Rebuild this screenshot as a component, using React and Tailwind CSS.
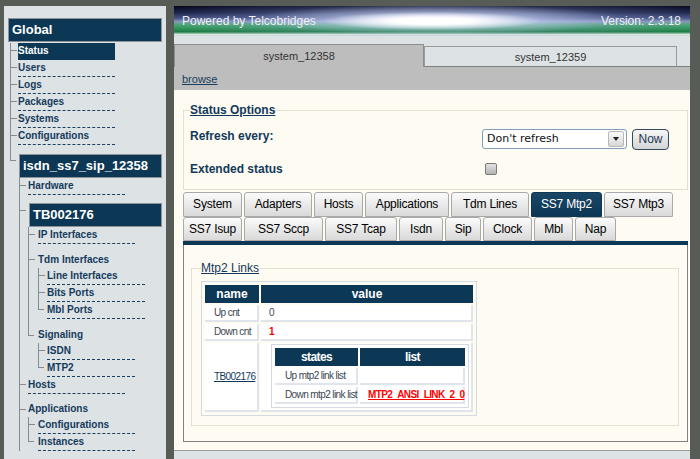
import React from 'react';

// tree connector: vertical line for siblings, tick into the item
function Branch({ last = false, tick = 'h-[8px]', col = 'w-[8px]', children }) {
  return (
    <div className="flex">
      <div className={`${col} shrink-0 ${last ? '' : 'border-l border-[#858b90]'}`}>
        <div className={`${tick} w-[6px] border-b border-[#858b90] ${last ? 'border-l' : ''}`} />
      </div>
      <div className="min-w-0 flex-1">{children}</div>
    </div>
  );
}

function Leaf({ label, w = 'w-[97px]', active = false }) {
  return (
    <div
      className={`${w} h-[17px] border-b border-dashed text-[10px] font-bold leading-[16px] ${
        active ? 'bg-[#0c3855] border-[#0c3855] text-white' : 'border-[#1d3f5e] text-[#153b5c]'
      }`}
    >
      {label}
    </div>
  );
}

function Label({ label }) {
  return <div className="h-[16px] text-[10px] font-bold leading-[16px] text-[#153b5c]">{label}</div>;
}

function NodeBox({ label, cls = '' }) {
  return (
    <div className={`h-[24px] border border-[#8e9398] bg-[#0c3855] pl-[3px] text-[13px] font-bold leading-[22px] text-white ${cls}`}>
      {label}
    </div>
  );
}

const ROW1 = [
  ['System', 'w-[59px]'],
  ['Adapters', 'w-[68px]'],
  ['Hosts', 'w-[49px]'],
  ['Applications', 'w-[84px]'],
  ['Tdm Lines', 'w-[78px]'],
  ['SS7 Mtp2', 'w-[71px]', true],
  ['SS7 Mtp3', 'w-[69px]'],
];

const ROW2 = [
  ['SS7 Isup', 'w-[59px]'],
  ['SS7 Sccp', 'w-[79px]'],
  ['SS7 Tcap', 'w-[72px]'],
  ['Isdn', 'w-[44px]'],
  ['Sip', 'w-[36px]'],
  ['Clock', 'w-[49px]'],
  ['Mbl', 'w-[39px]'],
  ['Nap', 'w-[41px]'],
];

function Tab({ label, w, active, h }) {
  return (
    <div
      className={`${w} ${h} shrink-0 whitespace-nowrap rounded-t-[3px] border text-center text-[12px] leading-[22px] tracking-[-0.2px] ${
        active
          ? 'border-[#0c3855] bg-[linear-gradient(to_bottom,#1a4565,#0c3855)] text-white'
          : 'border-[#a9a9a9] bg-[linear-gradient(to_bottom,#fbfbfb,#d9d9d9)] text-black'
      }`}
    >
      {label}
    </div>
  );
}

const TH = 'h-[18px] bg-[#0c3855] text-center text-[12px] font-bold leading-[18px] text-white';
const TD = 'h-[17px] whitespace-nowrap border-r-2 border-b-2 border-[#dfe5ea] bg-white text-[10px] tracking-[-0.6px] leading-[15px] text-[#3a4550]';

function Sidebar() {
  return (
    <div className="w-[162px] shrink-0 bg-[#dde2e5] px-[4px] pt-[12px]">
      <NodeBox label="Global" />
      <div className="pl-[2px] pt-[1px]">
        <Branch><Leaf label="Status" active /></Branch>
        <Branch><Leaf label="Users" /></Branch>
        <Branch><Leaf label="Logs" /></Branch>
        <Branch><Leaf label="Packages" /></Branch>
        <Branch><Leaf label="Systems" /></Branch>
        <Branch><Leaf label="Configurations" /></Branch>
        <Branch last tick="h-[16px]">
          <div className="pt-[9px]">
            <NodeBox label="isdn_ss7_sip_12358" cls="ml-[1px]" />
          </div>
          <div className="pl-[1px]">
            <Branch col="w-[9px]"><Leaf label="Hardware" /></Branch>
            <Branch col="w-[9px]" tick="h-[16px]">
              <div className="pt-[8px]">
                <NodeBox label="TB002176" cls="ml-[1px]" />
              </div>
              <div>
                <Branch col="w-[10px]"><Leaf label="IP Interfaces" /></Branch>
                <Branch col="w-[10px]" tick="h-[16px]">
                  <div className="pt-[8px]"><Label label="Tdm Interfaces" /></div>
                  <div>
                    <Branch col="w-[9px]"><Leaf label="Line Interfaces" w="w-[98px]" /></Branch>
                    <Branch col="w-[9px]"><Leaf label="Bits Ports" w="w-[98px]" /></Branch>
                    <Branch col="w-[9px]" last><Leaf label="Mbl Ports" w="w-[98px]" /></Branch>
                  </div>
                </Branch>
                <Branch col="w-[10px]" last tick="h-[17px]">
                  <div className="pt-[8px]"><Label label="Signaling" /></div>
                  <div>
                    <Branch col="w-[9px]"><Leaf label="ISDN" w="w-[88px]" /></Branch>
                    <Branch col="w-[9px]" last><Leaf label="MTP2" w="w-[88px]" /></Branch>
                  </div>
                </Branch>
              </div>
            </Branch>
            <Branch col="w-[9px]"><Leaf label="Hosts" /></Branch>
            <Branch col="w-[9px]" tick="h-[16px]">
              <div className="pt-[7px]"><Label label="Applications" /></div>
              <div>
                <Branch col="w-[10px]"><Leaf label="Configurations" /></Branch>
                <Branch col="w-[10px]" last><Leaf label="Instances" /></Branch>
              </div>
            </Branch>
          </div>
        </Branch>
      </div>
    </div>
  );
}

function StatusOptions() {
  return (
    <fieldset className="border border-[#e3e0d3] pl-[6px] pb-[9px]">
      <legend className="text-[12px] font-bold leading-[12px] text-[#12395a] underline">Status Options</legend>
      <div className="mt-[12px] flex h-[22px] items-center">
        <div className="w-[292px] self-start pt-[1px] text-[12px] font-bold leading-[14px] text-[#12395a]">Refresh every:</div>
        <div className="flex h-[20px] w-[145px] items-center rounded-[3px] border border-[#7f9db9] bg-white pl-[4px] font-['DejaVu_Sans',sans-serif] text-[11px] text-[#111]">
          <span className="flex-1">Don't refresh</span>
          <div className="mr-[2px] flex h-[16px] w-[16px] items-center justify-center rounded-[2px] border border-[#b8b8b8] bg-[linear-gradient(to_bottom,#fafafa,#d8d8d8)]">
            <div className="h-0 w-0 border-x-[3px] border-t-[4px] border-x-transparent border-t-[#222]" />
          </div>
        </div>
        <div className="ml-[5px] flex h-[21px] w-[37px] items-center justify-center rounded-[4px] border border-[#34495c] bg-[linear-gradient(to_bottom,#f7f7f7,#d2d4d6)] text-[12px] text-[#1d3550]">
          Now
        </div>
      </div>
      <div className="mt-[8px] flex h-[22px] items-center">
        <div className="w-[292px] text-[12px] font-bold leading-[14px] text-[#12395a]">Extended status</div>
        <div className="ml-[3px] h-[12px] w-[12px] rounded-[2px] border border-[#7a7a7a] bg-[linear-gradient(to_bottom,#e2e2e2,#b4b4b4)]" />
      </div>
    </fieldset>
  );
}

function Mtp2Links() {
  return (
    <fieldset className="border border-[#e3e0d3] pl-[9px] pb-[9px]">
      <legend className="text-[12px] leading-[14px] text-[#12395a] underline">Mtp2 Links</legend>
      <table className="mt-[6px] w-[276px] table-fixed border-separate border-spacing-[2px] border border-[#d3dae0] p-[1px]">
        <tbody>
          <tr>
            <th className={`${TH} w-[54px]`}>name</th>
            <th className={`${TH} w-[212px]`}>value</th>
          </tr>
          <tr>
            <td className={`${TD} pl-[9px]`}>Up cnt</td>
            <td className={`${TD} pl-[8px]`}>0</td>
          </tr>
          <tr>
            <td className={`${TD} pl-[9px]`}>Down cnt</td>
            <td className={`${TD} pl-[8px] font-bold text-[#ff0000]`}>1</td>
          </tr>
          <tr>
            <td className={`${TD} h-[68px] pl-[9px] align-middle`}>
              <span className="text-[#12395a] underline">TB002176</span>
            </td>
            <td className={`${TD} h-[68px] pt-[1px] pl-[10px] pb-[2px] align-top`}>
              <table className="w-[198px] table-fixed border-separate border-spacing-[2px] border border-[#d3dae0] p-[1px]">
                <tbody>
                  <tr>
                    <th className={`${TH} h-[16px] w-[83px] leading-[16px]`}>states</th>
                    <th className={`${TH} h-[16px] w-[105px] leading-[16px]`}>list</th>
                  </tr>
                  <tr>
                    <td className={`${TD} pl-[10px]`}>Up mtp2 link list</td>
                    <td className={TD} />
                  </tr>
                  <tr>
                    <td className={`${TD} pl-[10px]`}>Down mtp2 link list</td>
                    <td className={`${TD} pl-[8px] text-[9px] font-bold tracking-[-0.2px] text-[#ff0000] underline`}>MTP2_ANSI_LINK_2_0</td>
                  </tr>
                </tbody>
              </table>
            </td>
          </tr>
        </tbody>
      </table>
    </fieldset>
  );
}

export default function App() {
  return (
    <div className="flex h-[459px] w-[700px] gap-[8px] overflow-hidden bg-[#585c57] pl-[4px] pt-[6px] font-['Liberation_Sans',Arial,sans-serif]">
      <Sidebar />
      <div className="flex w-[516px] shrink-0 flex-col">
        <div className="flex h-[30px] items-center justify-between bg-[radial-gradient(ellipse_110px_9px_at_50%_50%,#ffffff_0%,#ffffff_35%,rgba(255,255,255,0)_100%),radial-gradient(ellipse_190px_15px_at_51%_45%,rgba(225,232,255,0.9)_0%,rgba(225,232,255,0)_100%),radial-gradient(ellipse_340px_20px_at_52%_42%,rgba(150,165,225,0.7)_0%,rgba(120,130,200,0)_100%),linear-gradient(to_bottom,#04051a_0%,#0e1436_22%,#34406e_40%,#8596b8_52%,#4aa56e_60%,#2f9855_72%,#1b7b40_86%,#d6e6e0_95%,#cfd8dc_100%)] pl-[8px] pr-[9px] text-[12px] text-[#eef0f4]">
          <span>Powered by Telcobridges</span>
          <span>Version: 2.3.18</span>
        </div>
        <div className="h-[8px] bg-[#dde2e5]" />
        <div className="flex h-[23px] bg-[#dde2e5]">
          <div className="w-[250px] border-x border-t border-[#8c8c8c] bg-[#bdbdbd] text-center text-[11px] leading-[22px] text-[#333]">
            system_12358
          </div>
          <div className="mt-[2px] w-[253px] border border-[#9a9a9a] border-b-[#808080] text-center text-[11px] leading-[20px] text-[#333]">
            system_12359
          </div>
          <div className="flex-1 border-b border-[#808080]" />
        </div>
        <div className="h-[23px] bg-[#bdbdbd] pl-[8px] pt-[5px] text-[11px] leading-[14px]">
          <span className="text-[#1b3d5c] underline">browse</span>
        </div>
        <div className="h-[360px] bg-[#fdfbf2] pl-[9px] pr-[2px] pt-[14px]">
          <StatusOptions />
          <div className="mt-[2px] flex h-[25px] gap-[2px]">
            {ROW1.map(([l, w, a]) => (
              <Tab key={l} label={l} w={w} active={a} h="h-[25px]" />
            ))}
          </div>
          <div className="flex h-[24px] gap-[2px]">
            {ROW2.map(([l, w]) => (
              <Tab key={l} label={l} w={w} h="h-[24px]" />
            ))}
          </div>
          <div className="h-[4px] bg-[#0c3855]" />
          <div className="h-[197px] border-x border-b border-[#808080] pl-[7px] pr-[8px] pt-[16px]">
            <Mtp2Links />
          </div>
        </div>
        <div className="flex-1 border-t border-[#9a9a9a] bg-[#dde2e5]" />
      </div>
    </div>
  );
}
